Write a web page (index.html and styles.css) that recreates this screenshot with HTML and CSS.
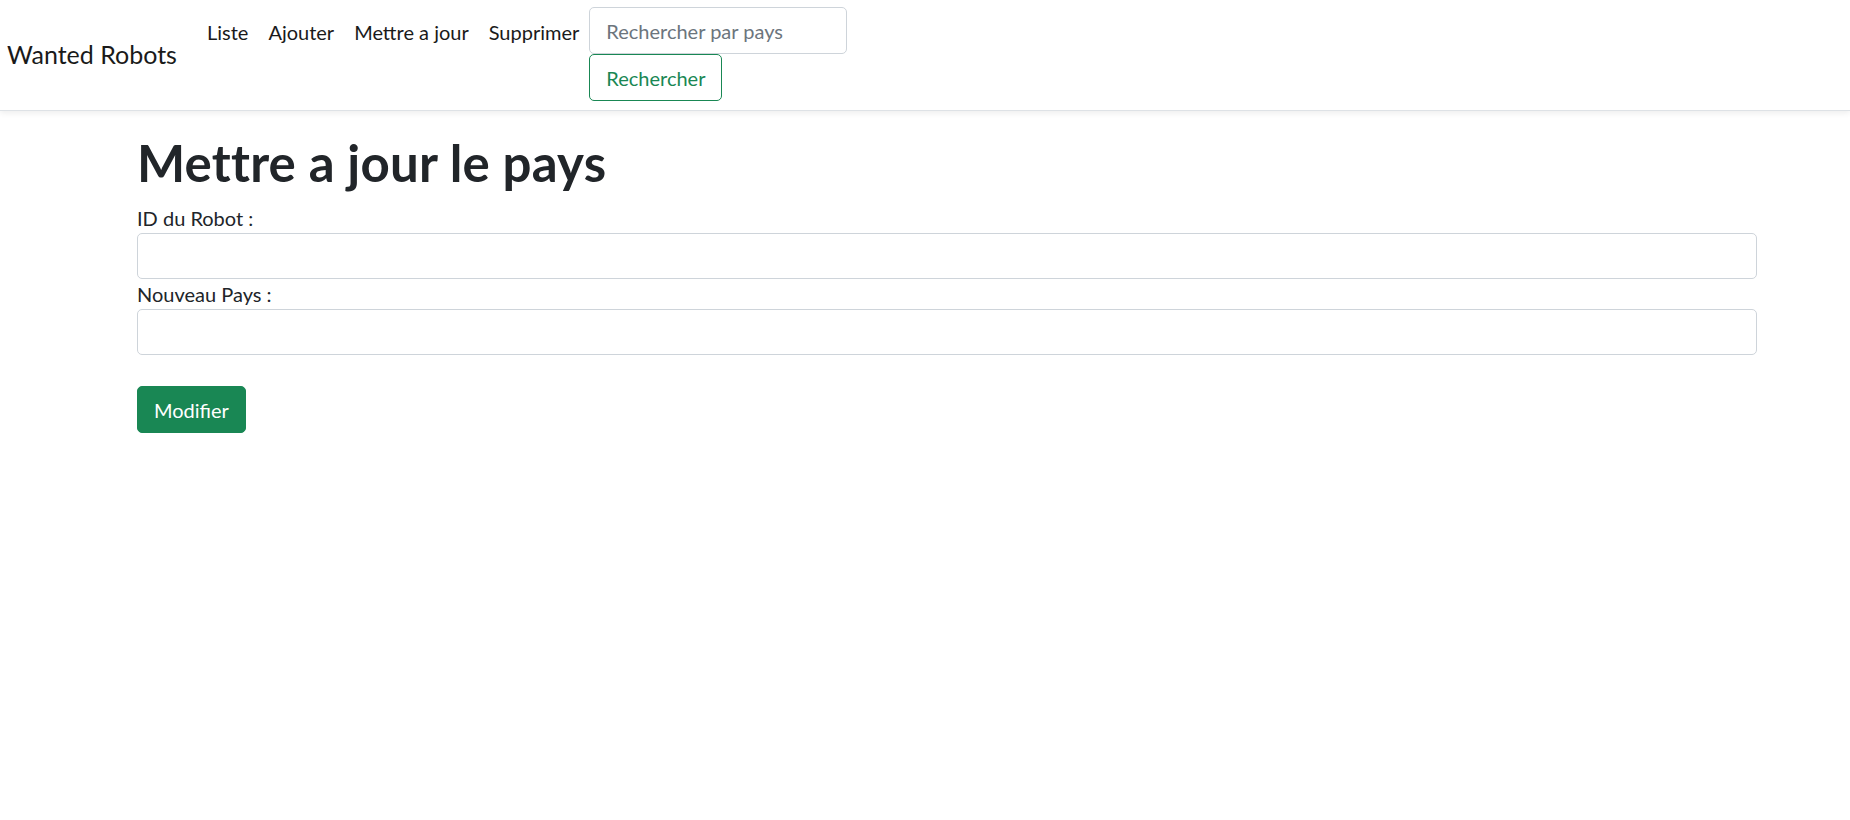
FILE: index.html
```html
<!DOCTYPE html>
<html lang="fr">
<head>
<meta charset="utf-8">
<title>Wanted Robots</title>
<link rel="stylesheet" href="styles.css">
</head>
<body>
<nav class="navbar">
  <a class="brand" href="#">Wanted Robots</a>
  <div class="collapse">
    <ul class="nav">
      <li><a class="nav-link" href="#">Liste</a></li>
      <li><a class="nav-link" href="#">Ajouter</a></li>
      <li><a class="nav-link" href="#">Mettre a jour</a></li>
      <li><a class="nav-link" href="#">Supprimer</a></li>
    </ul>
    <form class="search">
      <input class="search-input" type="text" placeholder="Rechercher par pays">
      <button class="btn-outline" type="button">Rechercher</button>
    </form>
  </div>
</nav>
<main class="container">
  <h1 class="title">Mettre a jour le pays</h1>
  <form class="update-form">
    <label class="field-label" for="robot-id">ID du Robot :</label>
    <input class="field-input" id="robot-id" type="text">
    <label class="field-label" for="new-country">Nouveau Pays :</label>
    <input class="field-input" id="new-country" type="text">
    <div class="spacer"></div>
    <button class="btn-success" type="button">Modifier</button>
  </form>
</main>
</body>
</html>
```

FILE: styles.css
```css
* { box-sizing: border-box; }

html, body {
  margin: 0;
  padding: 0;
  background: #fff;
}

body {
  font-family: Lato, "Open Sans", sans-serif;
  font-size: 20px;
  line-height: 30px;
  color: #212529;
}

.navbar {
  display: flex;
  align-items: center;
  padding: 7px 0 9px 7px;
  border-bottom: 1px solid #dee2e6;
  box-shadow: 0 2px 6px rgba(0, 0, 0, 0.075);
}

.brand {
  font-size: 25px;
  line-height: 37px;
  padding: 6px 0;
  margin-right: 20px;
  color: #1a1a1a;
  text-decoration: none;
}

.collapse {
  display: flex;
  align-items: flex-start;
}

.nav {
  display: flex;
  list-style: none;
  margin: 0;
  padding: 0;
}

.nav-link {
  display: block;
  padding: 10px 10px;
  color: #1a1a1a;
  text-decoration: none;
}

.search {
  display: flex;
  flex-direction: column;
  align-items: flex-start;
}

.search-input {
  width: 258px;
  height: 47px;
  padding: 0 16px;
  font: inherit;
  color: #212529;
  border: 1px solid #ced4da;
  border-radius: 5px;
  background: #fff;
}

.search-input::placeholder {
  color: #6c757d;
}

.btn-outline {
  height: 47px;
  padding: 0 16px;
  font: inherit;
  color: #198754;
  background: #fff;
  border: 1px solid #198754;
  border-radius: 5px;
}

.container {
  padding: 22px 93px 0 137px;
}

.title {
  font-size: 51px;
  line-height: 60px;
  font-weight: 700;
  letter-spacing: 0.2px;
  margin: 0 0 10px;
  color: #212529;
}

.update-form {
  display: flex;
  flex-direction: column;
  align-items: flex-start;
}

.field-label {
  display: block;
  height: 30px;
}

.field-input {
  width: 100%;
  height: 46px;
  padding: 0 16px;
  font: inherit;
  border: 1px solid #ced4da;
  border-radius: 5px;
  background: #fff;
}

.spacer {
  height: 31px;
}

.btn-success {
  height: 47px;
  padding: 0 16px;
  font: inherit;
  color: #fff;
  background: #198754;
  border: 1px solid #198754;
  border-radius: 5px;
}
```
